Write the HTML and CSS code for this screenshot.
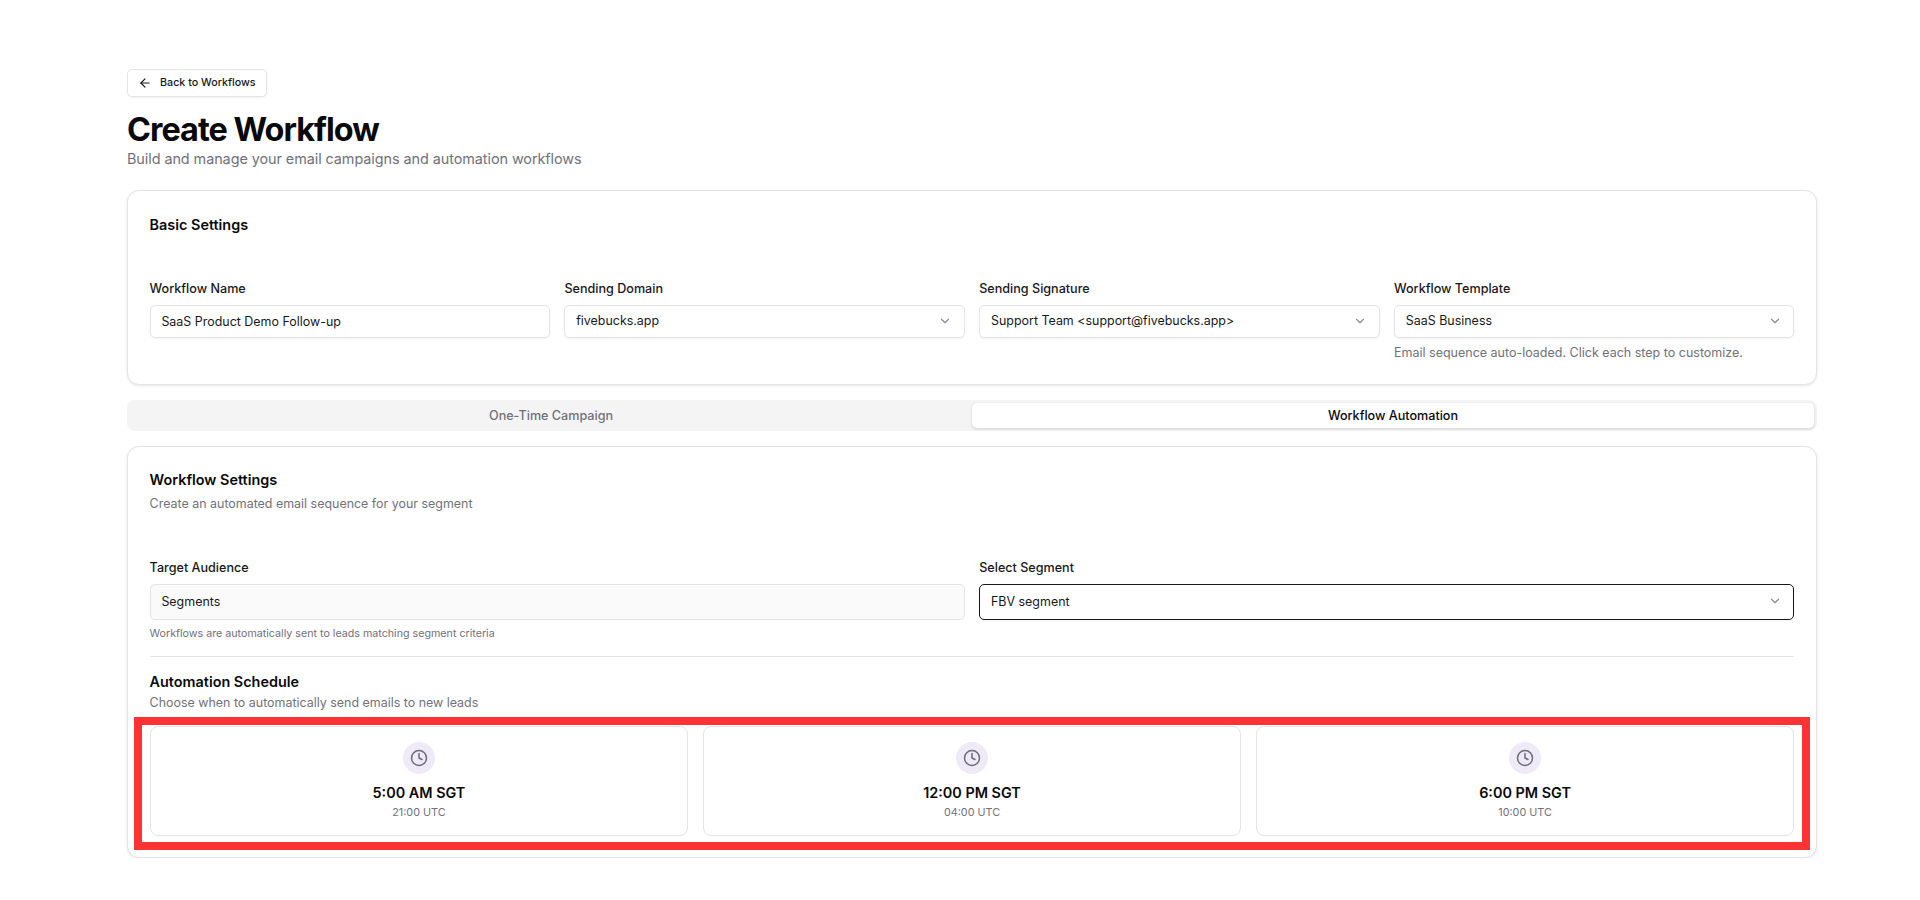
FILE: index.html
```html
<!DOCTYPE html>
<html lang="en">
<head>
    <meta charset="UTF-8">
    <title>Create Workflow</title>
    <link rel="stylesheet" href="styles.css">
</head>
<body>
    <div class="page">
        <!-- Header -->
        <button class="back-btn">
            <svg width="14" height="14" viewBox="0 0 24 24" class="icon"><path d="M12 19l-7-7 7-7"/><path d="M19 12H5"/></svg>
            Back to Workflows
        </button>
        <h1 class="title">Create Workflow</h1>
        <p class="subtitle">Build and manage your email campaigns and automation workflows</p>

        <!-- Basic Settings -->
        <section class="card basic-card">
            <h2 class="card-title basic-title">Basic Settings</h2>
            <div class="basic-grid">
                <div class="field">
                    <label class="label">Workflow Name</label>
                    <div class="control">SaaS Product Demo Follow-up</div>
                </div>
                <div class="field">
                    <label class="label">Sending Domain</label>
                    <div class="control select">fivebucks.app
                        <svg width="14" height="14" viewBox="0 0 24 24" class="chevron"><path d="M6 9l6 6 6-6"/></svg>
                    </div>
                </div>
                <div class="field">
                    <label class="label">Sending Signature</label>
                    <div class="control select">Support Team &lt;support@fivebucks.app&gt;
                        <svg width="14" height="14" viewBox="0 0 24 24" class="chevron"><path d="M6 9l6 6 6-6"/></svg>
                    </div>
                </div>
                <div class="field">
                    <label class="label">Workflow Template</label>
                    <div class="control select">SaaS Business
                        <svg width="14" height="14" viewBox="0 0 24 24" class="chevron"><path d="M6 9l6 6 6-6"/></svg>
                    </div>
                    <p class="help">Email sequence auto-loaded. Click each step to customize.</p>
                </div>
            </div>
        </section>

        <!-- Tabs -->
        <div class="tabs">
            <div class="tab">One-Time Campaign</div>
            <div class="tab active">Workflow Automation</div>
        </div>

        <!-- Workflow Settings -->
        <section class="card workflow-card">
            <h2 class="card-title">Workflow Settings</h2>
            <p class="card-desc">Create an automated email sequence for your segment</p>

            <div class="audience-grid">
                <div class="field">
                    <label class="label">Target Audience</label>
                    <div class="control tall disabled">Segments</div>
                    <p class="note">Workflows are automatically sent to leads matching segment criteria</p>
                </div>
                <div class="field">
                    <label class="label">Select Segment</label>
                    <div class="control tall select focused">FBV segment
                        <svg width="14" height="14" viewBox="0 0 24 24" class="chevron"><path d="M6 9l6 6 6-6"/></svg>
                    </div>
                </div>
            </div>

            <div class="schedule">
                <h3 class="schedule-title">Automation Schedule</h3>
                <p class="schedule-desc">Choose when to automatically send emails to new leads</p>
                <div class="slots">
                    <div class="slot">
                        <span class="slot-icon">
                            <svg width="18" height="18" viewBox="0 0 24 24" class="icon"><circle cx="12" cy="12" r="10"/><path d="M12 6v6l4 2"/></svg>
                        </span>
                        <div class="slot-time">5:00 AM SGT</div>
                        <div class="slot-utc">21:00 UTC</div>
                    </div>
                    <div class="slot">
                        <span class="slot-icon">
                            <svg width="18" height="18" viewBox="0 0 24 24" class="icon"><circle cx="12" cy="12" r="10"/><path d="M12 6v6l4 2"/></svg>
                        </span>
                        <div class="slot-time">12:00 PM SGT</div>
                        <div class="slot-utc">04:00 UTC</div>
                    </div>
                    <div class="slot">
                        <span class="slot-icon">
                            <svg width="18" height="18" viewBox="0 0 24 24" class="icon"><circle cx="12" cy="12" r="10"/><path d="M12 6v6l4 2"/></svg>
                        </span>
                        <div class="slot-time">6:00 PM SGT</div>
                        <div class="slot-utc">10:00 UTC</div>
                    </div>
                </div>
                <!-- Red annotation around the slots -->
                <div class="highlight"></div>
            </div>
        </section>
    </div>
</body>
</html>
```

FILE: styles.css
```css
/* General Reset */
* {
    margin: 0;
    padding: 0;
    box-sizing: border-box;
    font-family: 'Inter', sans-serif;
}

body {
    background: #fff;
    color: #09090b;
}

.page {
    width: 1690px;
    margin-left: 127px;
    padding-top: 68.5px;
}

.icon,
.chevron {
    fill: none;
    stroke: currentColor;
    stroke-width: 2;
    stroke-linecap: round;
    stroke-linejoin: round;
    flex-shrink: 0;
}

/* Header */
.back-btn {
    display: flex;
    align-items: center;
    gap: 8.6px;
    height: 28.8px;
    padding: 0 10.5px 0 9.5px;
    background: #fff;
    border: 1px solid #e4e4e7;
    border-radius: 5px;
    box-shadow: 0 1px 2px rgba(0, 0, 0, 0.05);
    font-size: 10.7px;
    font-weight: 500;
    color: #18181b;
}

.title {
    margin-top: 14.4px;
    font-size: 32.4px;
    line-height: 36px;
    font-weight: 700;
    letter-spacing: -0.96px;
}

.subtitle {
    font-size: 14.4px;
    line-height: 21.6px;
    letter-spacing: -0.06px;
    color: #71717a;
}

/* Cards */
.card {
    background: #fff;
    border: 1px solid #e4e4e7;
    border-radius: 12px;
    box-shadow: 0 1px 3px rgba(0, 0, 0, 0.1);
    padding: 0 21.6px;
}

.basic-card {
    margin-top: 20.8px;
    height: 195px;
}

.card-title {
    font-size: 14.4px;
    line-height: 21px;
    font-weight: 600;
}

.basic-title {
    margin-top: 22.5px;
}

.card-desc {
    margin-top: 5px;
    font-size: 12.45px;
    line-height: 18px;
    color: #71717a;
}

.basic-grid {
    display: grid;
    grid-template-columns: repeat(4, 1fr);
    gap: 14.4px;
    margin-top: 46px;
}

.audience-grid {
    display: grid;
    grid-template-columns: 1fr 1fr;
    gap: 14.4px;
    margin-top: 47.2px;
}

.label {
    display: block;
    font-size: 12.6px;
    line-height: 16px;
    font-weight: 500;
    color: #18181b;
}

.control {
    display: flex;
    align-items: center;
    justify-content: space-between;
    height: 33px;
    margin-top: 8px;
    padding: 0 11.7px 0 10.8px;
    border: 1px solid #e4e4e7;
    border-radius: 5px;
    box-shadow: 0 1px 2px rgba(0, 0, 0, 0.05);
    font-size: 12.45px;
    color: #18181b;
}

.control.select {
    padding-bottom: 1px;
}

.control.tall {
    height: 36px;
}

.control.disabled {
    background: #fafafa;
    box-shadow: none;
}

.control.focused {
    border-color: #18181b;
}

.chevron {
    color: #8a8a93;
}

.help {
    margin-top: 7px;
    font-size: 12.5px;
    line-height: 16px;
    color: #71717a;
}

.note {
    margin-top: 7.5px;
    font-size: 10.7px;
    line-height: 14px;
    color: #71717a;
}

/* Tabs */
.tabs {
    display: grid;
    grid-template-columns: 1fr 1fr;
    height: 31px;
    margin-top: 14.5px;
    padding: 3px;
    background: #f4f4f5;
    border-radius: 8px;
}

.tab {
    display: flex;
    align-items: center;
    justify-content: center;
    border-radius: 5px;
    font-size: 12.6px;
    font-weight: 500;
    color: #71717a;
}

.tab.active {
    background: #fff;
    color: #09090b;
    box-shadow: 0 1px 3px rgba(0, 0, 0, 0.15);
}

/* Workflow Settings */
.workflow-card {
    margin-top: 15px;
    padding-top: 22px;
    height: 412px;
}

.schedule {
    position: relative;
    margin-top: 15px;
    padding-top: 14px;
    border-top: 1px solid #e4e4e7;
}

.schedule-title {
    font-size: 14.4px;
    line-height: 21px;
    font-weight: 600;
}

.schedule-desc {
    margin-top: 2px;
    font-size: 12.45px;
    line-height: 18px;
    color: #71717a;
}

.slots {
    display: grid;
    grid-template-columns: repeat(3, 1fr);
    gap: 14.4px;
    margin-top: 14px;
}

.slot {
    display: flex;
    flex-direction: column;
    align-items: center;
    height: 109.5px;
    padding-top: 14.4px;
    border: 1px solid #e4e4e7;
    border-radius: 8px;
}

.slot-icon {
    display: flex;
    align-items: center;
    justify-content: center;
    width: 32.4px;
    height: 32.4px;
    border-radius: 50%;
    background: #efeaf7;
    color: #6b6b7b;
}

.slot-time {
    margin-top: 7.5px;
    font-size: 14.4px;
    line-height: 21px;
    font-weight: 600;
}

.slot-utc {
    margin-top: 2px;
    font-size: 10.8px;
    line-height: 16px;
    color: #71717a;
}

.highlight {
    position: absolute;
    left: -15.5px;
    right: -15.5px;
    bottom: -14px;
    height: 133px;
    border: 8px solid #ff3333;
    pointer-events: none;
}
```
